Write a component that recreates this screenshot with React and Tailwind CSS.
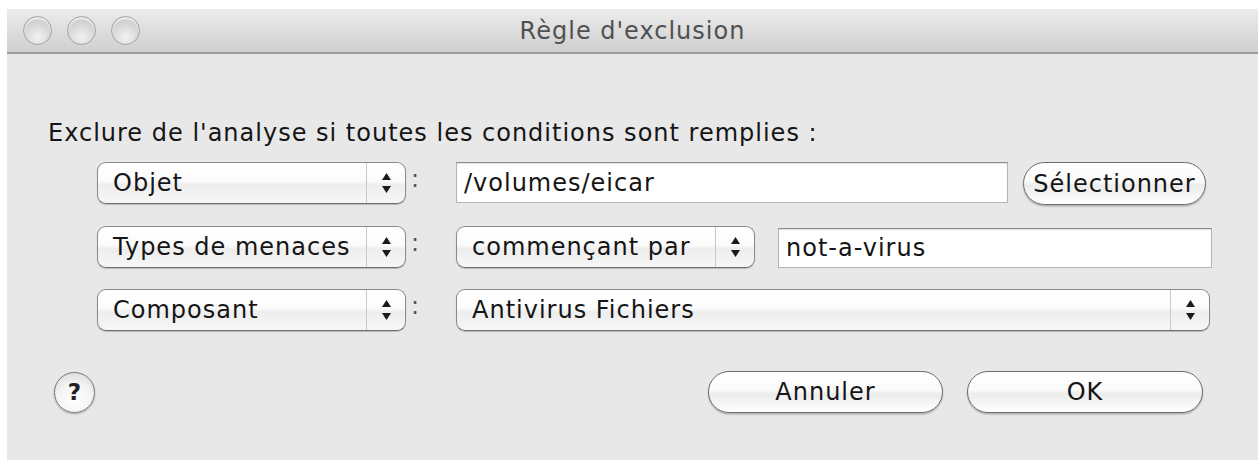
import React from "react";

const font = "font-['DejaVu_Sans','Liberation_Sans',sans-serif]";
const txt = "text-[24px] leading-[28px] tracking-[1px] text-[#151515]";

function Arrows() {
  return (
    <svg width="11" height="22" viewBox="0 0 11 22" className="block">
      <path d="M5.5 1 L10 8 L1 8 Z" fill="#1a1a1a" />
      <path d="M1 14 L10 14 L5.5 21 Z" fill="#1a1a1a" />
    </svg>
  );
}

function Popup({ label, width }) {
  return (
    <div
      className={`flex h-[42px] shrink-0 items-stretch rounded-[9px] border-[1.5px] border-[#8a8a8a] border-b-[#6e6e6e] bg-[linear-gradient(to_bottom,#ffffff_0%,#fbfbfb_45%,#ededed_55%,#f7f7f7_100%)] shadow-[0_1px_1px_rgba(0,0,0,0.2)] ${width}`}
    >
      <div className={`flex flex-1 items-center pl-[15px] ${txt}`}>{label}</div>
      <div className="flex w-[39px] items-center justify-center border-l border-[#c9c9c9]">
        <Arrows />
      </div>
    </div>
  );
}

function Field({ value, width, height }) {
  return (
    <div
      className={`flex shrink-0 items-center border border-[#b4b4b4] border-t-[#8c8c8c] bg-white pl-[7px] shadow-[inset_0_1px_1px_rgba(0,0,0,0.12)] ${txt} ${width} ${height}`}
    >
      {value}
    </div>
  );
}

function PushButton({ label, width, className = "" }) {
  return (
    <button
      className={`flex h-[42px] shrink-0 items-center justify-center rounded-full border-[1.5px] border-[#6c6c6c] bg-[linear-gradient(to_bottom,#ffffff_0%,#fafafa_45%,#ececec_55%,#ffffff_100%)] shadow-[0_1.5px_1.5px_rgba(0,0,0,0.25)] ${txt} ${width} ${className}`}
    >
      {label}
    </button>
  );
}

function Colon() {
  return (
    <div className="w-[50px] shrink-0 pl-[5px] text-[24px] leading-[34px] text-[#555]">:</div>
  );
}

function Light() {
  return (
    <div className="h-[29px] w-[29px] rounded-full border border-[#a3a3a3] bg-[radial-gradient(circle_at_50%_75%,#f2f2f2_0%,#d6d6d6_55%,#bdbdbd_100%)] shadow-[inset_0_2px_2px_rgba(255,255,255,0.8)]" />
  );
}

export default function App() {
  return (
    <div className={`min-h-[471px] bg-white pt-[9px] pl-[7px] ${font}`}>
      <div className="flex h-[451px] w-[1251px] flex-col bg-[#e8e8e8]">
        {/* title bar */}
        <div className="relative flex h-[45px] shrink-0 items-center justify-center border-b-2 border-[#9b9b9b] bg-[linear-gradient(to_bottom,#ececec,#cfcfcf)]">
          <div className="absolute left-[16px] top-[7px] flex gap-[15px]">
            <Light />
            <Light />
            <Light />
          </div>
          <span className="text-[24px] leading-[28px] tracking-[1px] text-[#505050]">Règle d'exclusion</span>
        </div>

        {/* content */}
        <div className="flex flex-1 flex-col pt-[65px]">
          <p className={`pl-[41px] ${txt}`}>
            Exclure de l'analyse si toutes les conditions sont remplies :
          </p>

          <div className="mt-[15px] flex flex-col gap-[21px] pl-[90px]">
            <div className="flex items-start">
              <Popup label="Objet" width="w-[309px]" />
              <Colon />
              <Field value="/volumes/eicar" width="w-[552px]" height="h-[41px]" />
              <PushButton label="Sélectionner" width="w-[183px]" className="ml-[15px] h-[43px] tracking-[0px]" />
            </div>
            <div className="flex items-start">
              <Popup label="Types de menaces" width="w-[309px]" />
              <Colon />
              <Popup label="commençant par" width="w-[299px]" />
              <div className="ml-[23px] mt-[2px]">
                <Field value="not-a-virus" width="w-[434px]" height="h-[40px]" />
              </div>
            </div>
            <div className="flex items-start">
              <Popup label="Composant" width="w-[309px]" />
              <Colon />
              <Popup label="Antivirus Fichiers" width="w-[754px]" />
            </div>
          </div>

          <div className="mt-[40px] flex items-center pl-[47px] pr-[55px]">
            <div className="flex h-[41px] w-[41px] items-center justify-center rounded-full border-[1.5px] border-[#7a7a7a] bg-[radial-gradient(circle_at_50%_70%,#ffffff_0%,#f4f4f4_50%,#d2d2d2_100%)] text-[23px] font-bold leading-none text-[#222] shadow-[0_1px_2px_rgba(0,0,0,0.3)]">
              ?
            </div>
            <div className="ml-auto flex gap-[24px]">
              <PushButton label="Annuler" width="w-[235px]" />
              <PushButton label="OK" width="w-[236px]" />
            </div>
          </div>
        </div>
      </div>
    </div>
  );
}
